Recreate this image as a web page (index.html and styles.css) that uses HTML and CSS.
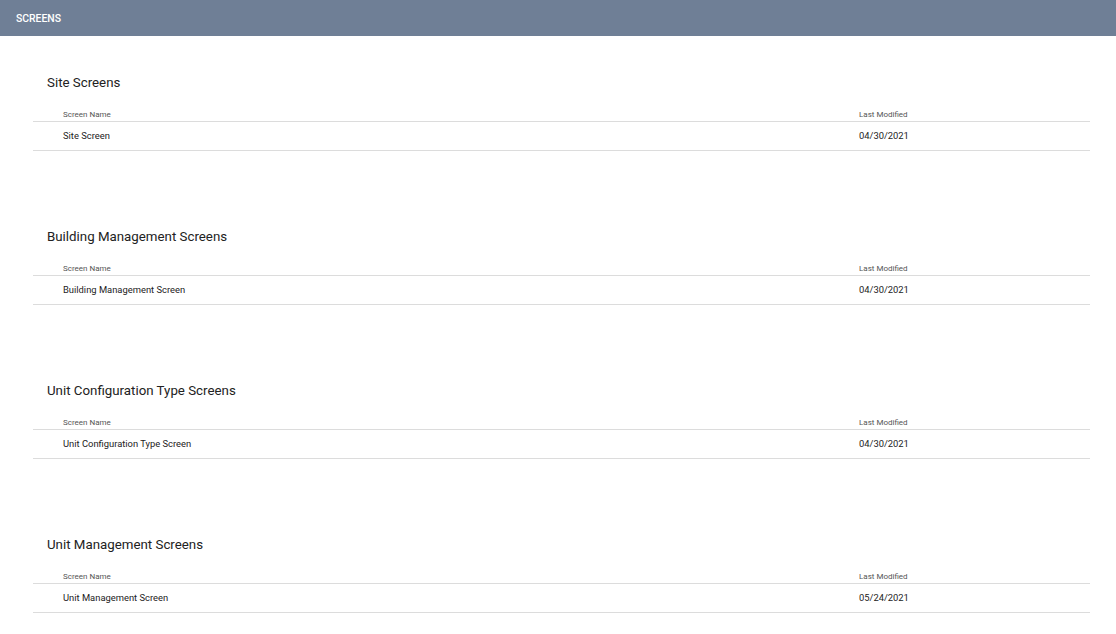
FILE: index.html
```html
<!DOCTYPE html>
<html>
<head>
<meta charset="utf-8">
<title>Screens</title>
<link rel="stylesheet" href="styles.css">
</head>
<body>
<header class="appbar">SCREENS</header>
<main class="content">
  <section class="group">
    <h2 class="group-title">Site Screens</h2>
    <div class="row head"><span class="c-name">Screen Name</span><span class="c-date">Last Modified</span></div>
    <div class="row item"><span class="c-name">Site Screen</span><span class="c-date">04/30/2021</span></div>
  </section>
  <section class="group">
    <h2 class="group-title">Building Management Screens</h2>
    <div class="row head"><span class="c-name">Screen Name</span><span class="c-date">Last Modified</span></div>
    <div class="row item"><span class="c-name">Building Management Screen</span><span class="c-date">04/30/2021</span></div>
  </section>
  <section class="group">
    <h2 class="group-title">Unit Configuration Type Screens</h2>
    <div class="row head"><span class="c-name">Screen Name</span><span class="c-date">Last Modified</span></div>
    <div class="row item"><span class="c-name">Unit Configuration Type Screen</span><span class="c-date">04/30/2021</span></div>
  </section>
  <section class="group">
    <h2 class="group-title">Unit Management Screens</h2>
    <div class="row head"><span class="c-name">Screen Name</span><span class="c-date">Last Modified</span></div>
    <div class="row item"><span class="c-name">Unit Management Screen</span><span class="c-date">05/24/2021</span></div>
  </section>
</main>
</body>
</html>
```
FILE: styles.css
```css
* { box-sizing: border-box; }
html, body { margin: 0; padding: 0; }
body {
  font-family: Roboto, "Liberation Sans", sans-serif;
  color: #222;
  background: #fff;
}
.appbar {
  height: 36px;
  background: #6f7f96;
  color: #fff;
  font-size: 10.4px;
  font-weight: 500;
  display: flex;
  align-items: center;
  padding-left: 16px;
}
.content {
  padding: 0 26px 0 33px;
  display: flex;
  flex-direction: column;
  gap: 76px;
  margin-top: 37px;
}
.group-title {
  margin: 0 0 14px 14px;
  font-size: 13.3px;
  font-weight: 400;
  line-height: 20px;
  color: #222;
}
.row {
  display: flex;
  align-items: center;
  border-bottom: 1px solid #dcdcdc;
  padding-left: 30px;
}
.row.head {
  height: 15px;
  font-size: 8px;
  color: #555;
}
.row.item {
  height: 29px;
  font-size: 9.4px;
  color: #222;
  padding-bottom: 1px;
}
.c-name { flex: 0 0 796px; }
.c-date { flex: 1; }
```
